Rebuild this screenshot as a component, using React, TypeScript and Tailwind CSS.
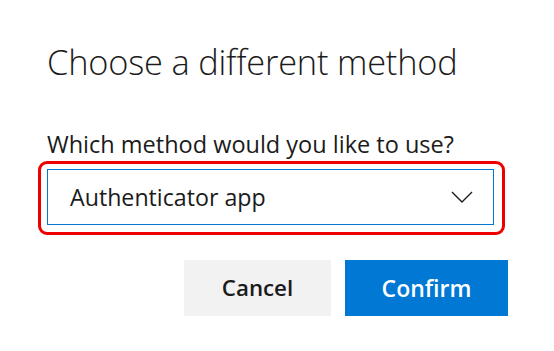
export default function App() {
  return (
    <div
      className="w-[554px] h-[351px] bg-white pl-[47px] pr-[46px] text-[#1b1b1b]"
      style={{ fontFamily: '"Open Sans", "Noto Sans", sans-serif' }}
    >
      {/* Title */}
      <h1 className="pt-[38px] text-[34.4px] leading-[48px] font-light tracking-[-0.2px]">
        Choose a different method
      </h1>
      {/* Label */}
      <div className="mt-[43px] text-[23.5px] leading-[30px] whitespace-nowrap">
        Which method would you like to use?
      </div>
      {/* Select with highlight */}
      <div className="mt-[2px] ml-[-9px] mr-[3px] h-[74px] border-[3px] border-[#ee0000] rounded-[9px] pt-[5px] pl-[6px] pr-[8px]">
        <div className="h-[56px] border border-[#0078d4] flex items-center justify-between pl-[22px] pr-[20px]">
          <span className="text-[23.2px]">Authenticator app</span>
          <svg width="22" height="12" viewBox="0 0 22 12" fill="none">
            <path d="M1 1 L11 11 L21 1" stroke="#1b1b1b" strokeWidth="1.4" />
          </svg>
        </div>
      </div>
      {/* Buttons */}
      <div className="mt-[25px] flex justify-end gap-[14px]">
        <button className="w-[147px] h-[56px] bg-[#f2f2f2] text-[22.3px] font-semibold text-[#1b1b1b]">
          Cancel
        </button>
        <button className="w-[163px] h-[56px] bg-[#0078d4] text-[23px] font-semibold text-white">
          Confirm
        </button>
      </div>
    </div>
  );
}
